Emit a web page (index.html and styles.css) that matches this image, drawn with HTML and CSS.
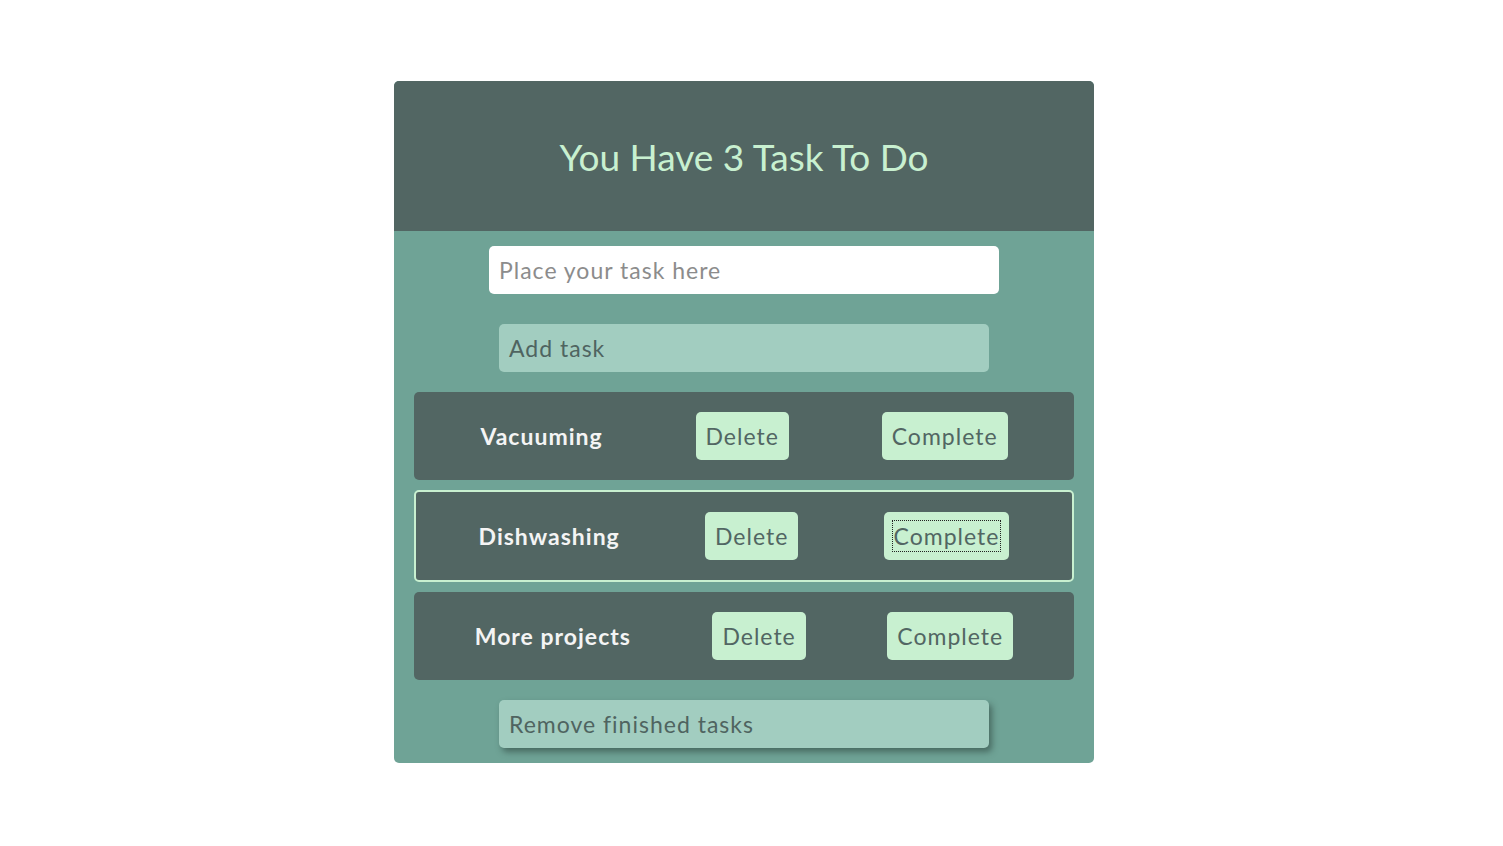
FILE: index.html
```html
<!DOCTYPE html>
<html lang="en">
<head>
<meta charset="utf-8">
<title>Todo</title>
<link rel="stylesheet" href="styles.css">
</head>
<body>
<div class="page">
  <div class="card">
    <header class="head">
      <h1 class="title">You Have 3 Task To Do</h1>
    </header>
    <div class="body">
      <input class="task-input" type="text" placeholder="Place your task here">
      <button class="wide-btn add-btn">Add task</button>
      <div class="task">
        <span class="task-name">Vacuuming</span>
        <button class="small-btn">Delete</button>
        <button class="small-btn">Complete</button>
      </div>
      <div class="task task-active">
        <span class="task-name">Dishwashing</span>
        <button class="small-btn">Delete</button>
        <button class="small-btn"><span class="focus-ring">Complete</span></button>
      </div>
      <div class="task">
        <span class="task-name">More projects</span>
        <button class="small-btn">Delete</button>
        <button class="small-btn">Complete</button>
      </div>
      <button class="wide-btn remove-btn">Remove finished tasks</button>
    </div>
  </div>
</div>
</body>
</html>
```
FILE: styles.css
```css
* { box-sizing: border-box; }
body {
  margin: 0;
  background: #ffffff;
  font-family: Lato, "Open Sans", sans-serif;
}
.page {
  display: flex;
  justify-content: center;
  padding: 81px 15px 0 0;
}
.card {
  width: 700px;
  border-radius: 5px;
  overflow: hidden;
  background: #6fa396;
}
.head {
  height: 150px;
  background: #526663;
  display: flex;
  align-items: center;
  justify-content: center;
}
.title {
  margin: 0;
  font-weight: 400;
  font-size: 37px;
  letter-spacing: 0;
  color: #c8f0d0;
}
.body {
  display: flex;
  flex-direction: column;
  align-items: center;
  padding: 15px 20px 15px;
}
.task-input {
  width: 510px;
  height: 48px;
  border: none;
  border-radius: 5px;
  background: #ffffff;
  padding: 0 10px;
  font-family: Lato, sans-serif;
  font-size: 23px;
  letter-spacing: 1px;
  color: #526663;
  outline: none;
}
.task-input::placeholder {
  color: #8c8c8c;
}
.wide-btn {
  width: 490px;
  height: 48px;
  border: none;
  border-radius: 5px;
  background: #a2cdc0;
  color: #4f6460;
  font-family: Lato, sans-serif;
  font-size: 23px;
  letter-spacing: 1px;
  text-align: left;
  padding: 0 10px;
}
.add-btn {
  margin: 30px 0 20px;
}
.remove-btn {
  margin-top: 20px;
  box-shadow: 3px 4px 6px rgba(40, 60, 55, 0.55);
}
.task {
  width: 660px;
  display: flex;
  align-items: center;
  justify-content: space-around;
  padding: 20px;
  background: #526663;
  border-radius: 5px;
  margin-bottom: 10px;
}
.task:last-of-type { margin-bottom: 0; }
.task-active {
  border: 2px solid #c8f0d0;
}
.task-name {
  color: #f4f4f4;
  font-weight: 700;
  font-size: 23px;
  letter-spacing: 1px;
}
.small-btn {
  height: 48px;
  border: none;
  border-radius: 5px;
  background: #c8f0d0;
  color: #526663;
  font-family: Lato, sans-serif;
  font-size: 23px;
  letter-spacing: 1px;
  padding: 0 10px;
}
.focus-ring {
  outline: 1px dotted #222;
  outline-offset: 1px;
}
```
